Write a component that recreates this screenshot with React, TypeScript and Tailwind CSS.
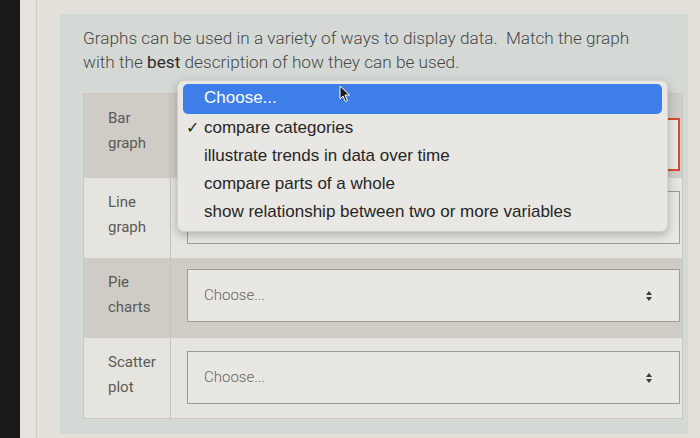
import React from 'react';

const rows = [
  { a: 'Bar', b: 'graph', dark: true, h: 'h-[84px]', sel: 'pt-[24px]', error: true, covered: true },
  { a: 'Line', b: 'graph', dark: false, h: 'h-[80px]', sel: 'pt-[13px]', error: false, covered: true },
  { a: 'Pie', b: 'charts', dark: true, h: 'h-[80px]', sel: 'pt-[11px]', error: false, covered: false },
  { a: 'Scatter', b: 'plot', dark: false, h: 'h-[80px]', sel: 'pt-[13px]', error: false, covered: false },
];

const options = [
  'compare categories',
  'illustrate trends in data over time',
  'compare parts of a whole',
  'show relationship between two or more variables',
];

const Arrows: React.FC = () => (
  <svg width="8" height="12" viewBox="0 0 8 12" className="text-[#3a3a3a]">
    <path d="M4 1 L7 5 H1 Z" fill="currentColor" />
    <path d="M4 11 L7 7 H1 Z" fill="currentColor" />
  </svg>
);

const App: React.FC = () => {
  return (
    <div className="relative w-[700px] h-[438px] overflow-hidden flex bg-[#e3e0d9] font-['Roboto',sans-serif]">
      {/* dark screen edge */}
      <div className="w-[20px] h-full bg-[#1b1917]" />
      <div className="w-[40px] h-full flex">
        <div className="w-[17px] h-full bg-[#e6e3dc] border-r border-[#cfccc5]" />
        <div className="flex-1 h-full bg-[#e2e0d9]" />
      </div>

      {/* question panel */}
      <div className="w-[628px] mt-[14px] mb-[4px] bg-[#d5d9d6] pl-[23px] pr-[5px] pt-[12px]">
        <p className="text-[17.2px] leading-[24px] text-[#474747] font-light w-[570px]">
          Graphs can be used in a variety of ways to display data.&nbsp; Match the graph
          <br />
          with the <span className="font-normal text-[#2b2b2b]">best</span> description of how they can be used.
        </p>

        <div className="mt-[19px] border border-[#c9c8c2] bg-[#e5e3dd]">
          {rows.map((r) => (
            <div key={r.a} className={`grid grid-cols-[87px_1fr] ${r.h} ${r.dark ? 'bg-[#ceccc5]' : 'bg-[#e6e4de]'}`}>
              <div className="border-r border-[#c4c3bd] pl-[24px] pt-[12px] text-[15px] leading-[25px] text-[#5a5a5a]">
                <div>{r.a}</div>
                <div>{r.b}</div>
              </div>
              <div className={`pl-[16px] pr-[2px] ${r.sel}`}>
                <div
                  className={`h-[53px] flex items-center justify-between pl-[16px] pr-[26px] bg-[#e9e7e2] ${
                    r.error ? 'border-2 border-[#d6492c]' : 'border border-[#9c9b97]'
                  }`}
                >
                  {!r.covered && <span className="text-[15px] text-[#666] font-light">Choose...</span>}
                  {!r.covered && <Arrows />}
                </div>
              </div>
            </div>
          ))}
        </div>
      </div>

      {/* open dropdown menu */}
      <div className="absolute left-[177px] top-[80px] w-[491px] h-[152px] rounded-[7px] bg-[#e9e7e3] shadow-[0_3px_10px_rgba(0,0,0,0.25)] border border-[#d3d1cc] px-[5px] pt-[3px] font-['Liberation_Sans',sans-serif] text-[17px]">
        <div className="h-[30px] rounded-[5px] bg-[#3d7ee8] text-white flex items-center pl-[21px] pb-[3px]">Choose...</div>
        <div className="flex flex-col">
          {options.map((o, i) => (
            <div key={o} className="relative h-[28px] flex items-center pl-[21px] text-[#262626]">
              {i === 0 && <span className="absolute left-[3px] text-[16px]">✓</span>}
              {o}
            </div>
          ))}
        </div>
      </div>

      {/* mouse pointer */}
      <svg className="absolute left-[339px] top-[85px]" width="12" height="18" viewBox="0 0 12 18">
        <path d="M1 1 L1 14 L4 11 L6.5 16.5 L8.5 15.5 L6 10 L10.5 10 Z" fill="#1c1c1c" stroke="#ffffff" strokeWidth="1" />
      </svg>
    </div>
  );
};

export default App;
